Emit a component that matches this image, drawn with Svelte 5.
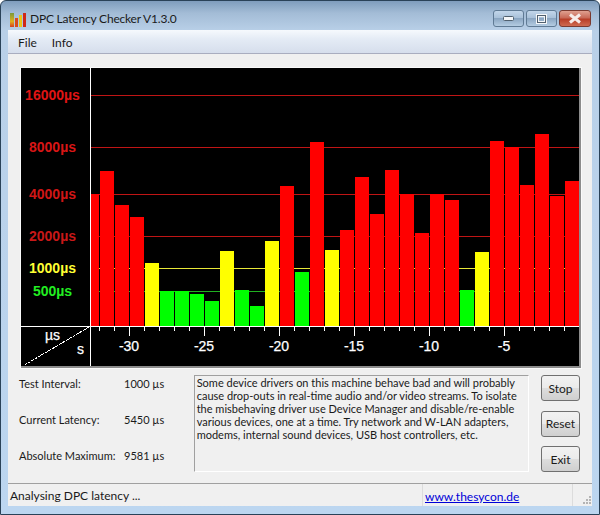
<script>
  // chart geometry is in svg coordinates, origin at the top left of the black plot
  const ox = 69; // y axis
  const oy = 258; // x axis
  const tops = [194,171,205,217,263,291,291,294,301,251,290,306,241,186,272,142,250,230,177,214,170,194,233,194,200,290,252,141,147,185,134,196,181];

  function color(top) {
    if (top >= 268) return '#00ff00';
    if (top >= 237) return '#ffff00';
    return '#ff0000';
  }

  const bars = tops.map((top, i) => {
    const x = i === 0 ? 70 : 64 + 15 * i;
    return { x, w: i === 0 ? 8 : 14, y: top - 68, h: 326 - top, fill: color(top) };
  });

  const grid = [
    { y: 27, label: '16000µs', line: '#c01515', text: '#e01414' },
    { y: 79, label: '8000µs', line: '#c01515', text: '#d81616' },
    { y: 126, label: '4000µs', line: '#c01515', text: '#d01616' },
    { y: 168, label: '2000µs', line: '#c01515', text: '#c81818' },
    { y: 200, label: '1000µs', line: '#e8e838', text: '#ffff33' },
    { y: 223, label: '500µs', line: '#20b020', text: '#22ee22' }
  ];

  const ticks = Array.from({ length: 32 }, (_, i) => ({ x: 78 + 15 * i, long: i % 5 === 2 }));
  const secs = [-30, -25, -20, -15, -10, -5];

  const lines = [
    'Some device drivers on this machine behave bad and will probably',
    'cause drop-outs in real-time audio and/or video streams. To isolate',
    'the misbehaving driver use Device Manager and disable/re-enable',
    'various devices, one at a time. Try network and W-LAN adapters,',
    'modems, internal sound devices, USB host controllers, etc.'
  ];

  const stats = [
    ['Test Interval:', '1000 µs'],
    ['Current Latency:', '5450 µs'],
    ['Absolute Maximum:', '9581 µs']
  ];
</script>

<div class="window">
  <header class="titlebar">
    <svg class="appicon" width="16" height="15" viewBox="0 0 16 15" aria-hidden="true">
      <defs>
        <linearGradient id="barfade" x1="0" y1="0" x2="0" y2="1">
          <stop offset="0" stop-color="#7a9a3a" />
          <stop offset=".6" stop-color="#e0b020" />
          <stop offset="1" stop-color="#d84020" />
        </linearGradient>
      </defs>
      <rect x="0" y="1" width="4" height="14" fill="url(#barfade)" />
      <rect x="5" y="6" width="3" height="9" fill="#d84a20" />
      <rect x="9" y="3" width="3" height="12" fill="#e8c418" />
      <rect x="13" y="1" width="3" height="14" fill="#d02818" />
    </svg>
    <span class="title">DPC Latency Checker V1.3.0</span>
    <div class="controls">
      <div class="ctl">
        <svg width="11" height="5" viewBox="0 0 11 5" aria-hidden="true"><rect x=".5" y=".5" width="10" height="4" rx="1" fill="#f4f6f8" stroke="#50606e" /></svg>
      </div>
      <div class="ctl">
        <svg width="11" height="10" viewBox="0 0 11 10" aria-hidden="true"><rect x="1.5" y="1.5" width="8" height="7" fill="none" stroke="#f4f6f8" stroke-width="3" /><rect x="1.5" y="1.5" width="8" height="7" fill="none" stroke="#50606e" /></svg>
      </div>
      <div class="ctl close">
        <svg width="14" height="11" viewBox="0 0 14 11" aria-hidden="true"><path d="M2 1.5 L12 9.5 M12 1.5 L2 9.5" stroke="#f6ecea" stroke-width="3" /></svg>
      </div>
    </div>
  </header>

  <div class="client">
    <nav class="menubar">
      <span>File</span>
      <span>Info</span>
    </nav>

    <main class="body">
      <div class="plot">
        <svg width="558" height="298" viewBox="0 0 558 298" shape-rendering="crispEdges">
          <rect width="558" height="298" fill="#000" />
          {#each grid as g}
            <line x1={ox} x2="558" y1={g.y + 0.5} y2={g.y + 0.5} stroke={g.line} />
          {/each}
          {#each bars as b}
            <rect x={b.x} y={b.y} width={b.w} height={b.h} fill={b.fill} />
          {/each}
          <line x1="0" x2="558" y1={oy + 0.5} y2={oy + 0.5} stroke="#fff" />
          <line x1={ox + 0.5} x2={ox + 0.5} y1="0" y2="298" stroke="#fff" />
          {#each ticks as t}
            <line x1={t.x + 0.5} x2={t.x + 0.5} y1={oy + 1} y2={oy + (t.long ? 10 : 5)} stroke="#fff" />
          {/each}
          <line x1="68" y1="259" x2="2" y2="298" stroke="#fff" stroke-dasharray="3 1" />
          <g class="ylabels">
            {#each grid as g}
              <text x="31.5" y={g.y + 5} text-anchor="middle" fill={g.text}>{g.label}</text>
            {/each}
          </g>
          <text class="axis" x="24" y="272" fill="#fff">µs</text>
          <text class="axis" x="56" y="286" fill="#fff">s</text>
          {#each secs as s, i}
            <text class="axis" x={108 + 75 * i} y="283" text-anchor="middle" fill="#fff">{s}</text>
          {/each}
        </svg>
      </div>

      <section class="panel">
        <dl class="stats">
          {#each stats as [k, v]}
            <dt>{k}</dt>
            <dd>{v}</dd>
          {/each}
        </dl>
        <div class="note">
          {#each lines as l}
            <div>{l}</div>
          {/each}
        </div>
        <div class="actions">
          <button>Stop</button>
          <button>Reset</button>
          <button>Exit</button>
        </div>
      </section>
    </main>

    <footer class="status">
      <span class="msg">Analysing DPC latency ...</span>
      <a class="link" href="#top">www.thesycon.de</a>
      <span class="grip">
        <svg width="12" height="12" viewBox="0 0 12 12" aria-hidden="true">
          <path d="M9 2h2v2H9zM6 5h2v2H6zM9 5h2v2H9zM3 8h2v2H3zM6 8h2v2H6zM9 8h2v2H9z" fill="#b4b4b4" />
        </svg>
      </span>
    </footer>
  </div>
</div>

<style>
  :global(body) {
    margin: 0;
    background: #fff;
  }
  .window {
    width: 600px;
    height: 515px;
    box-sizing: border-box;
    display: flex;
    flex-direction: column;
    padding: 0 7px 8px;
    border: 1px solid #2a4258;
    border-radius: 6px 6px 0 0;
    background: linear-gradient(180deg, #7f9dbd 0, #a3bcd6 12px, #b9d0e8 30px, #bcd6f0 100%);
    font: 12px Lato, "Open Sans", sans-serif;
    color: #1a1a1a;
  }
  .titlebar {
    height: 29px;
    flex: none;
    display: flex;
    align-items: flex-start;
    padding-left: 2px;
  }
  .appicon {
    margin-top: 11px;
  }
  .title {
    margin: 10px 0 0 4px;
    letter-spacing: -0.2px;
  }
  .controls {
    margin-left: auto;
    margin-right: 1px;
    display: flex;
    gap: 2px;
    padding-top: 9px;
  }
  .ctl {
    width: 29px;
    height: 15px;
    display: flex;
    align-items: center;
    justify-content: center;
    border: 1px solid #5f7a94;
    border-radius: 3px;
    background: linear-gradient(180deg, #c2d6ea 0, #a9c1d9 45%, #8ba6c2 50%, #b4cce2 100%);
  }
  .ctl.close {
    width: 30px;
    border-color: #7a3a30;
    background: linear-gradient(180deg, #e0a090 0, #c86a58 45%, #b83e28 55%, #cf6a50 100%);
  }
  .client {
    flex: 1;
    display: flex;
    flex-direction: column;
    min-height: 0;
    background: #f0f0f0;
  }
  .menubar {
    height: 24px;
    flex: none;
    box-sizing: border-box;
    display: flex;
    align-items: center;
    gap: 15px;
    padding: 2px 10px 0;
    background: linear-gradient(180deg, #f6f9fd 0, #e4ebf5 40%, #d6deec 100%);
    border-bottom: 1px solid #a9adbf;
  }
  .body {
    flex: 1;
    min-height: 0;
    padding: 14px 12px 0 13px;
  }
  .plot {
    width: 558px;
    height: 298px;
    border-right: 2px solid #8c8c8c;
    border-bottom: 2px solid #8c8c8c;
    outline: 1px solid #fafafa;
  }
  .plot svg {
    display: block;
  }
  .ylabels text {
    font: bold 14px "Liberation Sans", Arial, sans-serif;
  }
  .axis {
    font: 14px "Liberation Sans", Arial, sans-serif;
    stroke: #fff;
    stroke-width: 0.25px;
  }
  .panel {
    display: flex;
    margin-top: 7px;
    height: 97px;
  }
  .stats {
    width: 173px;
    margin: 0 0 0 -2px;
    padding: 0;
    display: grid;
    grid-template-columns: 105px 1fr;
    grid-auto-rows: 36px;
    align-content: start;
    font-size: 11px;
    line-height: 18px;
  }
  .stats dt {
    white-space: nowrap;
  }
  .stats dd {
    margin: 0;
  }
  .note {
    width: 336px;
    margin-left: 2px;
    box-sizing: border-box;
    padding: 0 2px;
    border: 1px solid;
    border-color: #a0a0a0 #fff #fff #a0a0a0;
    font-size: 11px;
    line-height: 13px;
    white-space: nowrap;
  }
  .actions {
    margin-left: 12px;
    display: flex;
    flex-direction: column;
    justify-content: space-between;
  }
  button {
    width: 39px;
    height: 26px;
    padding: 0;
    border: 1px solid #707070;
    border-radius: 3px;
    background: linear-gradient(180deg, #f2f2f2 0, #ebebeb 48%, #dddddd 52%, #cfcfcf 100%);
    font: 12px Lato, "Open Sans", sans-serif;
    color: #1a1a1a;
  }
  .status {
    height: 22px;
    flex: none;
    box-sizing: content-box;
    display: flex;
    align-items: center;
    border-top: 1px solid #a0a0a0;
    background: #f0f0f0;
  }
  .msg {
    width: 414px;
    box-sizing: border-box;
    padding: 1px 0 0 2px;
  }
  .link {
    flex: 1;
    height: 100%;
    box-sizing: border-box;
    display: flex;
    align-items: center;
    padding: 2px 0 0 2px;
    border-left: 1px solid #dcdcdc;
    color: #0000d8;
    text-decoration: underline;
  }
  .grip {
    width: 19px;
    height: 100%;
    display: flex;
    align-items: flex-end;
    justify-content: flex-end;
    border-left: 1px solid #dcdcdc;
  }
</style>
